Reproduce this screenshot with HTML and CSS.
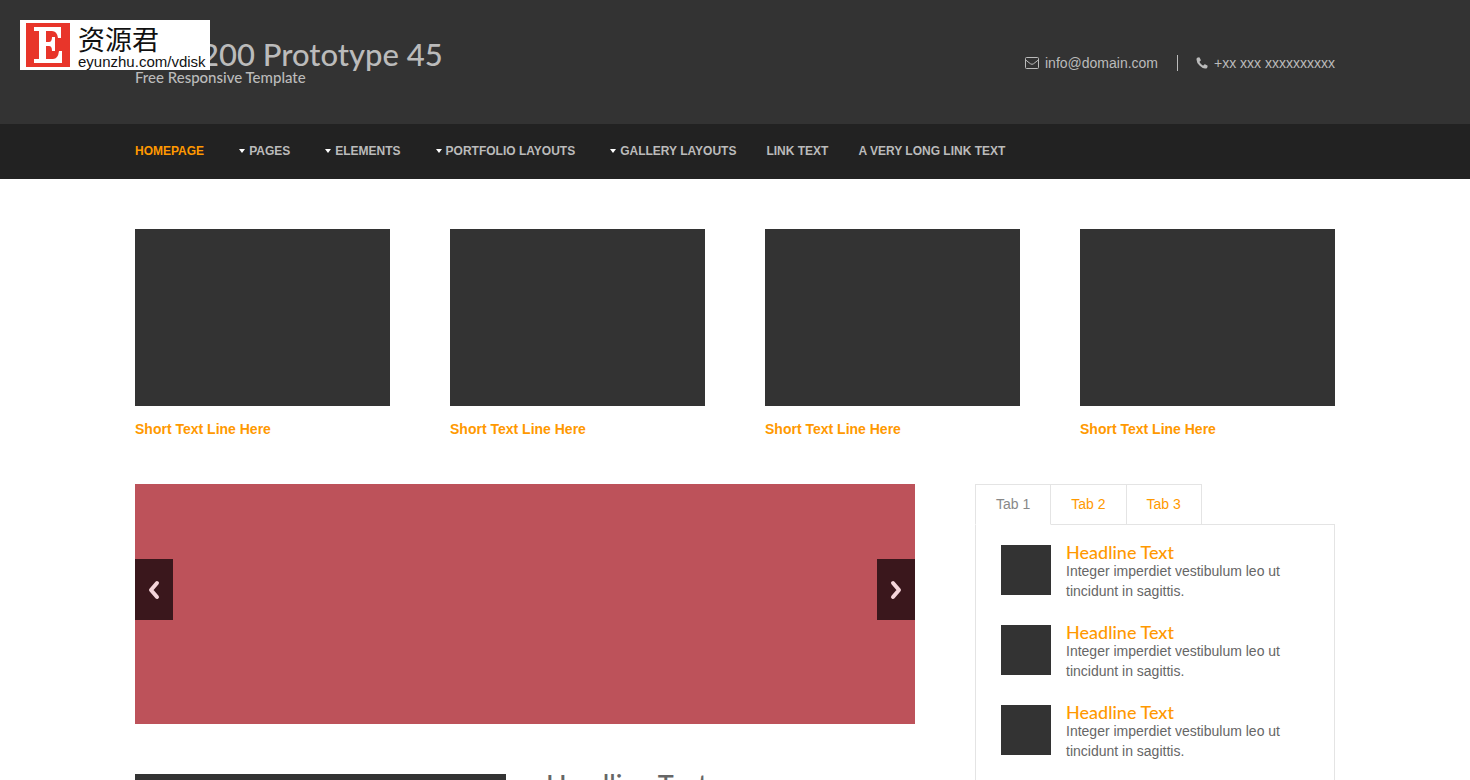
FILE: index.html
```
<!DOCTYPE html>
<html lang="en">
<head>
<meta charset="utf-8">
<meta name="viewport" content="width=device-width, initial-scale=1">
<title>RS-1200 Prototype 45</title>
<link rel="stylesheet" href="styles.css">
</head>
<body>
<a class="badge" href="#" aria-label="eyunzhu.com/vdisk">
  <span class="badge-mark">
    <svg viewBox="0 0 44 44" width="44" height="44" aria-hidden="true"><rect width="44" height="44" fill="#e8352a"/><path d="M8 4H35V15H32Q31 8 26 8H20V19H23Q26 19 26 14H29V28H26Q26 23 23 23H20V36H27Q32 36 33 28H36V40H8V36H13V8H8Z" fill="#fff"/></svg>
  </span>
  <span class="badge-text"><span class="badge-name" lang="zh">资源君</span><span class="badge-url">eyunzhu.com/vdisk</span></span>
</a>
<header class="header">
  <div class="wrap header-row">
    <div class="brand">
      <h1 class="brand-title"><a href="#">RS-1200 Prototype 45</a></h1>
      <p class="brand-sub">Free Responsive Template</p>
    </div>
    <ul class="contact">
      <li><svg width="14" height="12" viewBox="0 0 14 12" fill="none" stroke="currentColor" aria-hidden="true"><rect x=".5" y=".5" width="13" height="11" rx="1"/><path d="M.7 3L5.5 6.8Q7 7.8 8.5 6.8L13.3 3"/></svg>info@domain.com</li>
      <li><svg width="12" height="12" viewBox="0 0 12 12" fill="currentColor" aria-hidden="true"><path d="M.5 2.5Q.6 1 1.2.8L3 .3Q3.4.2 3.7.8L4.8 3Q5 3.5 4.5 3.8L3.5 4.7Q3.5 5.4 5 7T7.4 8.6L8.3 7.5Q8.6 7.1 9 7.3L11.3 8.5Q11.8 8.8 11.6 9.3L11.2 10.7Q10.7 11.5 9 11.6Q6.5 11.5 3.5 8.5T.5 2.5Z"/></svg>+xx xxx xxxxxxxxxx</li>
    </ul>
  </div>
</header>
<nav class="nav">
  <ul class="wrap menu">
    <li><a class="active" href="#">Homepage</a></li>
    <li><a class="drop" href="#">Pages</a></li>
    <li><a class="drop" href="#">Elements</a></li>
    <li><a class="drop" href="#">Portfolio Layouts</a></li>
    <li><a class="drop" href="#">Gallery Layouts</a></li>
    <li><a href="#">Link Text</a></li>
    <li><a href="#">A Very Long Link Text</a></li>
  </ul>
</nav>
<main class="wrap main">
  <ul class="cards">
    <li><div class="card-image"></div><a href="#">Short Text Line Here</a></li>
    <li><div class="card-image"></div><a href="#">Short Text Line Here</a></li>
    <li><div class="card-image"></div><a href="#">Short Text Line Here</a></li>
    <li><div class="card-image"></div><a href="#">Short Text Line Here</a></li>
  </ul>
  <div class="columns">
    <div class="content">
      <section class="slider" aria-label="Slides">
        <button class="arrow" type="button" aria-label="Previous"><svg width="12" height="20" viewBox="0 0 12 20" aria-hidden="true"><path d="M9 3L3 10L9 17"/></svg></button>
        <button class="arrow" type="button" aria-label="Next"><svg width="12" height="20" viewBox="0 0 12 20" aria-hidden="true"><path d="M3 3L9 10L3 17"/></svg></button>
      </section>
      <article class="feature">
        <div class="feature-image"></div>
        <h2 class="feature-title">Headline Text</h2>
      </article>
    </div>
    <aside class="tabs">
      <div class="tab-list" role="tablist">
        <button class="tab selected" type="button" role="tab" aria-selected="true">Tab 1</button>
        <button class="tab" type="button" role="tab" aria-selected="false">Tab 2</button>
        <button class="tab" type="button" role="tab" aria-selected="false">Tab 3</button>
      </div>
      <div class="panel" role="tabpanel">
        <article class="post"><div class="thumb"></div><div><h3><a href="#">Headline Text</a></h3><p>Integer imperdiet vestibulum leo ut tincidunt in sagittis.</p></div></article>
        <article class="post"><div class="thumb"></div><div><h3><a href="#">Headline Text</a></h3><p>Integer imperdiet vestibulum leo ut tincidunt in sagittis.</p></div></article>
        <article class="post"><div class="thumb"></div><div><h3><a href="#">Headline Text</a></h3><p>Integer imperdiet vestibulum leo ut tincidunt in sagittis.</p></div></article>
      </div>
    </aside>
  </div>
</main>
</body>
</html>
```
FILE: styles.css
```
* { box-sizing: border-box; }
body { margin: 0; background: #fff; color: #666; font: 14px/20px "Liberation Sans", Arial, sans-serif; }
h1, h2, h3, p, ul { margin: 0; padding: 0; }
ul { list-style: none; }
a { color: #ff9900; text-decoration: none; }
button { font: inherit; cursor: pointer; }
.wrap { width: calc(100% - 40px); max-width: 1200px; margin: 0 auto; }

.badge { position: absolute; z-index: 2; top: 20px; left: 20px; display: flex; gap: 8px; width: 190px; height: 50px; padding: 3px 6px; background: #fff; color: #111; }
.badge-mark { display: flex; }
.badge-text { display: flex; flex-direction: column; }
.badge-name { font: 27px/32px "Noto Sans CJK SC", sans-serif; }
.badge-url { font-size: 15px; line-height: 14px; }

.header { background: #333; color: #bbb; }
.header-row { display: flex; justify-content: space-between; align-items: center; padding: 38px 0 36px; }
.brand-title, .brand-sub, .post h3, .feature-title { font-family: Lato, sans-serif; font-weight: 500; }
.brand-title { font-size: 31px; line-height: 32px; }
.brand-title a { color: inherit; }
.brand-sub { padding-bottom: 4px; font-size: 15px; line-height: 14px; }
.contact { display: flex; }
.contact li { display: flex; align-items: center; gap: 6px; line-height: 16px; }
.contact li + li { margin-left: 19px; padding-left: 18px; border-left: 1px solid #bbb; }

.nav { background: #222; }
.menu { display: flex; flex-wrap: wrap; gap: 0 30px; padding: 17px 0 18px; font-size: 12px; font-weight: 700; text-transform: uppercase; }
.menu a { display: flex; align-items: center; color: #bbb; }
.menu a.active { color: #ff9900; }
.menu .drop { padding-left: 4px; gap: 4px; }
.menu .drop::before { content: ""; border: 3px solid transparent; border-top: 4px solid #fff; border-bottom: 0; margin-left: 1px; }

.main { padding-top: 50px; }
.cards { display: grid; grid-template-columns: repeat(4, 1fr); gap: 60px; margin-bottom: 45px; }
.card-image { aspect-ratio: 255 / 177; margin-bottom: 13px; background: #333; }
.cards a { display: block; font-weight: 700; }
.columns { display: grid; grid-template-columns: 13fr 6fr; gap: 60px; }
.slider { display: flex; justify-content: space-between; align-items: center; aspect-ratio: 13 / 4; padding-bottom: 30px; background: #bd525a; }
.arrow { display: flex; align-items: center; justify-content: center; width: 38px; height: 61px; padding: 1px 0 0; border: 0; background: #3a171c; }
.arrow path { fill: none; stroke: #f5d5da; stroke-width: 4; stroke-linecap: round; stroke-linejoin: round; }
.feature { display: grid; grid-template-columns: 371fr 369fr; gap: 40px; margin-top: 50px; }
.feature-image { aspect-ratio: 2; background: #333; }
.feature-title { font-size: 27px; line-height: 20px; }

.tab-list { display: flex; }
.tab { height: 41px; padding: 0 20px 2px; border: 1px solid #e4e4e4; border-left-width: 0; background: #fff; color: #ff9900; }
.tab:first-child { border-left-width: 1px; }
.tab.selected { border-bottom-color: #fff; color: #888; }
.panel { position: relative; z-index: -1; margin-top: -1px; padding: 20px 25px; border: 1px solid #e4e4e4; min-height: 480px; }
.post { display: grid; grid-template-columns: 50px 1fr; gap: 15px; margin-bottom: 20px; }
.thumb { height: 50px; background: #333; }
.post h3 { padding-bottom: 2px; font-size: 18px; line-height: 14px; }
.post p { line-height: 20px; padding-bottom: 4px; }
```
